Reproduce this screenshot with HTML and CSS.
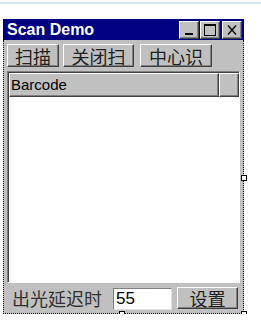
FILE: index.html
```html
<!DOCTYPE html>
<html lang="zh">
<head>
  <meta charset="UTF-8" />
  <title>Scan Demo</title>
  <link rel="stylesheet" href="styles.css">
</head>
<body>
  <div class="guide"></div>

  <div class="window">
    <div class="titlebar">
      <span class="title">Scan Demo</span>
      <div class="caption-btns">
        <span class="cbtn">
          <svg width="14" height="12" viewBox="0 0 14 12"><rect x="3" y="9" width="8" height="2" fill="#000"/></svg>
        </span>
        <span class="cbtn">
          <svg width="14" height="12" viewBox="0 0 14 12"><rect x="1.5" y="0.5" width="11" height="11" fill="none" stroke="#000"/><rect x="1" y="0" width="12" height="2" fill="#000"/></svg>
        </span>
        <span class="cbtn close">
          <svg width="14" height="12" viewBox="0 0 14 12"><path d="M3 1.5 L11 10.5 M11 1.5 L3 10.5" stroke="#000" stroke-width="1.3"/></svg>
        </span>
      </div>
    </div>

    <div class="client">
      <div class="toolbar">
        <button class="btn b1">扫描</button>
        <button class="btn b2">关闭扫</button>
        <button class="btn b3">中心识</button>
      </div>

      <div class="listview">
        <div class="list-header">
          <div class="col col-main">Barcode</div>
          <div class="col col-rest"></div>
        </div>
        <div class="list-body"></div>
      </div>

      <div class="footer">
        <span class="label">出光延迟时</span>
        <input class="delay" type="text" value="55" />
        <button class="btn set">设置</button>
      </div>

      <span class="handle h-right"></span>
      <span class="handle h-bottom"></span>
      <span class="handle h-corner"></span>
    </div>
  </div>
</body>
</html>
```

FILE: styles.css
```css
body {
  margin: 0;
  background-color: #fff;
  font-family: "Liberation Sans", Arial, sans-serif;
}

.guide {
  height: 2px;
  margin-top: 2px;
  background-color: #d6e6f5;
}

.window {
  width: 241px;
  margin: 15px 0 0 3px;
}

.titlebar {
  height: 21px;
  background-color: #000080;
  display: flex;
  align-items: center;
  justify-content: space-between;
}

.title {
  color: #fff;
  font-weight: bold;
  font-size: 16px;
  line-height: 21px;
  padding-left: 4px;
}

.caption-btns {
  display: flex;
  gap: 1px;
  padding-right: 2px;
}

.cbtn {
  width: 18px;
  height: 16px;
  background-color: #c0c0c0;
  border: 1px solid;
  border-color: #fff #404040 #404040 #fff;
  box-shadow: inset -1px -1px 0 #808080;
  display: flex;
  align-items: center;
  justify-content: center;
}

.cbtn.close {
  margin-left: 1px;
}

.client {
  position: relative;
  height: 273px;
  background-color: #c0c0c0;
  border: 1px dotted #000080;
  border-top: none;
  display: flex;
  flex-direction: column;
  padding: 0 3px 0 3px;
}

.toolbar {
  display: flex;
  height: 24px;
  margin-top: 4px;
}

.btn {
  font-family: "Noto Sans CJK SC", sans-serif;
  font-size: 18px;
  line-height: 20px;
  color: #222;
  background-color: #c0c0c0;
  border: 1px solid;
  border-color: #fff #404040 #404040 #fff;
  box-shadow: inset -1px -1px 0 #808080;
  padding: 0;
  margin: 0;
}

.b1 { width: 52px; }
.b2 { width: 71px; margin-left: 4px; }
.b3 { width: 72px; margin-left: 6px; }

.listview {
  margin-top: 4px;
  height: 213px;
  border: 1px solid;
  border-color: #808080 #fff #fff #808080;
  box-shadow: inset 1px 1px 0 #404040;
  background-color: #fff;
  display: flex;
  flex-direction: column;
  padding: 1px 0 0 1px;
}

.list-header {
  display: flex;
  height: 24px;
}

.col {
  background-color: #c0c0c0;
  border: 1px solid;
  border-color: #fff #404040 #404040 #fff;
  box-shadow: inset -1px -1px 0 #808080;
  font-size: 15px;
  line-height: 21px;
  padding-left: 1px;
}

.col-main { width: 207px; }
.col-rest { flex: 1; }

.list-body {
  flex: 1;
}

.footer {
  display: flex;
  align-items: center;
  height: 30px;
  margin-top: 1px;
}

.label {
  font-family: "Noto Sans CJK SC", sans-serif;
  font-size: 18px;
  line-height: 20px;
  color: #333;
  margin-left: 5px;
  width: 99px;
}

.delay {
  width: 55px;
  height: 20px;
  margin: 2px 0 0 2px;
  padding: 0 0 0 2px;
  border: 1px solid;
  border-color: #808080 #e0e0e0 #e0e0e0 #808080;
  font-family: "Liberation Sans", Arial, sans-serif;
  font-size: 17px;
  color: #000;
}

.set {
  width: 61px;
  height: 22px;
  margin-left: 5px;
}

.handle {
  position: absolute;
  width: 4px;
  height: 4px;
  background-color: #fff;
  border: 1px solid #000;
}

.h-right { right: -4px; top: 135px; }
.h-bottom { left: 115px; bottom: -4px; }
.h-corner { right: -4px; bottom: -4px; }
```
